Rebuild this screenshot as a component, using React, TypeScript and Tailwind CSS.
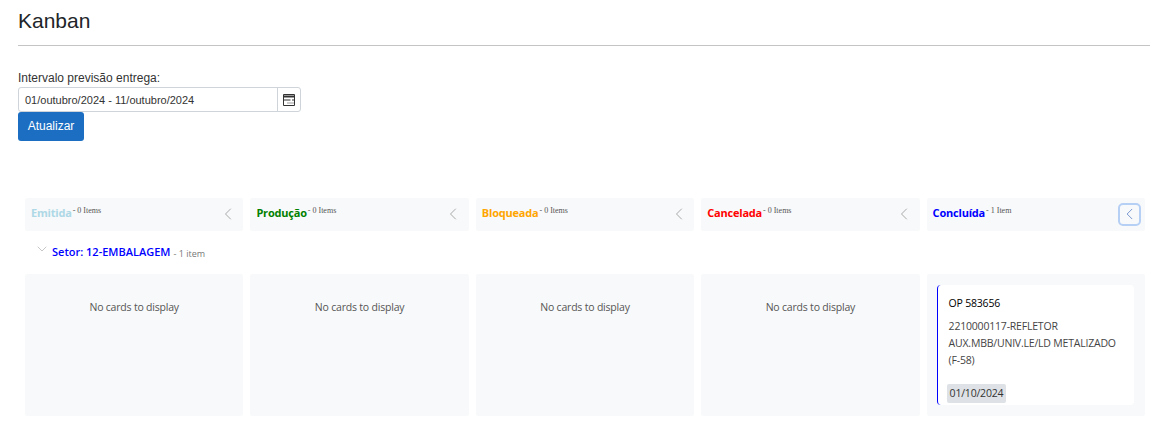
import { ChevronLeft, ChevronDown } from "lucide-react";

const columns = [
  { title: "Emitida", color: "text-[#add8e6]", count: "0 Items" },
  { title: "Produção", color: "text-[#008000]", count: "0 Items" },
  { title: "Bloqueada", color: "text-[#ffa500]", count: "0 Items" },
  { title: "Cancelada", color: "text-[#ff0000]", count: "0 Items" },
  { title: "Concluída", color: "text-[#0000ff]", count: "1 Item" },
];

function CalendarIcon() {
  return (
    <svg width="14" height="14" viewBox="0 0 14 14" fill="none" stroke="#333" strokeWidth="1">
      <path d="M1.5 1.5h11v11h-11z" />
      <path d="M1.5 3.5h11" strokeWidth="2" />
      <path d="M2 7h6.5M10 7h2.5" strokeWidth="1.2" />
      <path d="M5 10h7" stroke="#999" />
    </svg>
  );
}

function KanbanCard() {
  return (
    <div className="mr-[1px] flex h-[120px] flex-col rounded-[4px] border-l border-[#0000ff] bg-white pl-[11px] pr-1 pt-[10px] text-[10.5px] leading-[17px] tracking-[-0.2px] text-[#333]">
      <div className="text-black">OP 583656</div>
      <div className="mt-[6px] whitespace-nowrap text-[#444]">
        2210000117-REFLETOR
        <br />
        AUX.MBB/UNIV.LE/LD METALIZADO
        <br />
        (F-58)
      </div>
      <div className="mt-[15px]">
        <span className="-ml-[2px] inline-block rounded-[2px] bg-[#dee2e6] px-[3px] py-[1px] text-[#333]">01/10/2024</span>
      </div>
    </div>
  );
}

export default function App() {
  return (
    <div className="h-[426px] w-[1150px] overflow-hidden bg-white font-['Liberation_Sans',sans-serif]">
      <div className="pl-[18px]">
        <h1 className="pt-[8px] text-[21px] leading-[26px] text-[#212529]">Kanban</h1>
        <hr className="mt-[11px] border-[#c4c4c4]" />
        <label className="mt-[23px] block text-[12px] leading-[18px] text-[#333]">Intervalo previsão entrega:</label>
        <div className="flex h-[25px] w-[283px] rounded-[3px] border border-[#ced4da] text-[11px] text-[#333]">
          <div className="flex flex-1 items-center pl-[6px] pt-[1px]">01/outubro/2024 - 11/outubro/2024</div>
          <div className="flex w-[23px] items-center justify-center border-l border-[#ced4da]">
            <CalendarIcon />
          </div>
        </div>
        <button className="flex h-[29px] w-[66px] items-center justify-center rounded-[3px] bg-[#1b6ec2] pb-[1px] text-[12px] text-white">
          Atualizar
        </button>
      </div>

      <div className="ml-[25px] mt-[57px] w-[1120px] font-['Open_Sans',sans-serif]">
        <div className="grid grid-cols-5 gap-[7px]">
          {columns.map((col, i) => (
            <div key={col.title} className="flex h-[33px] items-center justify-between rounded-[2px] bg-[#f8f9fa] pl-[6px] pr-[4px]">
              <div className="-mt-[3px] flex items-start">
                <span className={`text-[11px] font-bold leading-[16px] tracking-[-0.2px] ${col.color}`}>{col.title}</span>
                <span className="ml-[1px] font-['Liberation_Serif',serif] text-[8px] leading-[12px] text-[#555]">- {col.count}</span>
              </div>
              {i === 4 ? (
                <div className="flex h-[23px] w-[23px] items-center justify-center rounded-[5px] border-2 border-[#b6cff5]">
                  <ChevronLeft size={20} strokeWidth={1} className="-mt-[1px] text-[#5b7fc7]" />
                </div>
              ) : (
                <div className="flex h-[23px] w-[23px] items-center justify-center">
                  <ChevronLeft size={20} strokeWidth={1} className="-mt-[1px] text-[#999]" />
                </div>
              )}
            </div>
          ))}
        </div>

        <div className="flex h-[43px] items-center pl-[9px]">
          <ChevronDown size={16} strokeWidth={1} className="-mt-[8px] text-[#aaa]" />
          <span className="-mt-[1px] ml-[2px] text-[11px] font-semibold text-[#0000ff]">Setor: 12-EMBALAGEM</span>
          <span className="ml-[3px] mt-[2px] text-[9px] text-[#777]">- 1 item</span>
        </div>

        <div className="grid grid-cols-5 gap-[7px]">
          {columns.map((col, i) => (
            <div key={col.title} className="h-[142px] rounded-[2px] bg-[#f8f9fa] px-[10px] pt-[11px]">
              {i === 4 ? (
                <KanbanCard />
              ) : (
                <div className="pt-[14px] text-center text-[10.5px] leading-[16px] tracking-[-0.2px] text-[#555]">No cards to display</div>
              )}
            </div>
          ))}
        </div>
      </div>
    </div>
  );
}
